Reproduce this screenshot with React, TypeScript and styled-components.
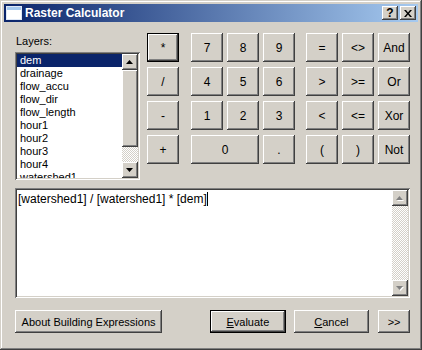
import React from 'react';
import styled, { createGlobalStyle, css } from 'styled-components';

const face = '#d4d0c8';

const GlobalStyle = createGlobalStyle`
  html, body { margin: 0; padding: 0; background: ${face}; }
  #root { width: 422px; height: 350px; overflow: hidden; }
`;

const raised = css`
  background: ${face};
  box-shadow: inset -1px -1px #404040, inset 1px 1px #fff,
    inset -2px -2px #808080, inset 2px 2px ${face};
`;

const sunken = css`
  box-shadow: inset 1px 1px #808080, inset -1px -1px #fff,
    inset 2px 2px #404040, inset -2px -2px ${face};
`;

const checker = css`
  background: repeating-conic-gradient(${face} 0 25%, #fff 0 50%) 0 0 / 2px 2px;
`;

const Window = styled.div`
  width: 422px;
  height: 350px;
  box-sizing: border-box;
  padding: 4px;
  background: ${face};
  box-shadow: inset -1px -1px #404040, inset 1px 1px ${face},
    inset -2px -2px #808080, inset 2px 2px #fff;
  display: flex;
  flex-direction: column;
  font-family: "Liberation Sans", Arial, sans-serif;
  font-size: 11px;
  color: #000;
`;

const TitleBar = styled.div`
  height: 18px;
  display: flex;
  align-items: center;
  padding: 0 2px 0 2px;
  background: linear-gradient(to right, #0a246a, #a6caf0);
`;

const TitleText = styled.span`
  color: #fff;
  font-weight: bold;
  font-size: 12px;
  margin-left: 3px;
`;

const CaptionButtons = styled.div`
  margin-left: auto;
  display: flex;
  gap: 2px;
`;

const CaptionButton = styled.div`
  ${raised};
  width: 16px;
  height: 14px;
  display: flex;
  align-items: center;
  justify-content: center;
  font-weight: bold;
  font-size: 12px;
  line-height: 14px;
`;

const Body = styled.div`
  flex: 1;
  display: flex;
  flex-direction: column;
  padding: 12px 8px 0 11px;
`;

const TopRow = styled.div`
  display: flex;
  align-items: flex-start;
`;

const LayersCol = styled.div`
  width: 126px;
  display: flex;
  flex-direction: column;
`;

const Label = styled.div`
  height: 14px;
  line-height: 14px;
  margin-bottom: 4px;
  padding-left: 1px;
`;

const ListBox = styled.div`
  ${sunken};
  background: #fff;
  height: 128px;
  box-sizing: border-box;
  padding: 2px;
  display: flex;
`;

const Items = styled.div`
  flex: 1;
  overflow: hidden;
`;

const Item = styled.div<{ $selected?: boolean }>`
  height: 13px;
  line-height: 13px;
  padding-left: 3px;
  white-space: nowrap;
  background: ${(p) => (p.$selected ? '#0a246a' : 'transparent')};
  color: ${(p) => (p.$selected ? '#fff' : '#000')};
`;

const ScrollBar = styled.div`
  width: 16px;
  display: flex;
  flex-direction: column;
`;

const ScrollButton = styled.div`
  ${raised};
  height: 16px;
  flex: none;
  display: flex;
  align-items: center;
  justify-content: center;
`;

const Thumb = styled.div<{ $h: number }>`
  ${raised};
  height: ${(p) => p.$h}px;
  flex: none;
`;

const Track = styled.div`
  ${checker};
  flex: 1;
`;

const Pad = styled.div`
  display: flex;
  margin-left: 7px;
  margin-top: -1px;
`;

const KeyGroup = styled.div<{ $cols: number; $ml?: number }>`
  display: grid;
  grid-template-columns: repeat(${(p) => p.$cols}, 32px);
  grid-auto-rows: 29px;
  column-gap: 4px;
  row-gap: 5px;
  margin-left: ${(p) => p.$ml ?? 0}px;
`;

const Key = styled.div<{ $span?: number; $default?: boolean }>`
  ${raised};
  ${(p) => p.$default && css`border: 1px solid #000;`}
  box-sizing: border-box;
  grid-column: span ${(p) => p.$span ?? 1};
  display: flex;
  align-items: center;
  justify-content: center;
  font-size: 12px;
`;

const Expression = styled.div`
  ${sunken};
  background: #fff;
  margin-top: 8px;
  height: 110px;
  box-sizing: border-box;
  padding: 2px;
  display: flex;
`;

const ExprText = styled.div`
  flex: 1;
  padding: 2px 1px;
  font-size: 12px;
  line-height: 15px;
  white-space: nowrap;
`;

const Caret = styled.span`
  display: inline-block;
  width: 0;
  height: 14px;
  border-left: 1px solid #000;
  vertical-align: -3px;
`;

const BottomRow = styled.div`
  display: flex;
  margin-top: 12px;
  height: 23px;
`;

const Button = styled.div<{ $w: number; $ml?: number; $default?: boolean }>`
  ${raised};
  ${(p) => p.$default && css`border: 1px solid #000;`}
  box-sizing: border-box;
  width: ${(p) => p.$w}px;
  margin-left: ${(p) => p.$ml ?? 0}px;
  display: flex;
  align-items: center;
  justify-content: center;
  font-size: 11px;
`;

const Arrow = ({ down, disabled }: { down?: boolean; disabled?: boolean }) => {
  const pts = down ? '0,0 7,0 3.5,4' : '3.5,0 7,4 0,4';
  return (
    <svg width="8" height="5" viewBox="0 0 8 5">
      {disabled && <polygon points={pts} fill="#fff" transform="translate(1,1)" />}
      <polygon points={pts} fill={disabled ? '#808080' : '#000'} />
    </svg>
  );
};

const layers = ['dem', 'drainage', 'flow_accu', 'flow_dir', 'flow_length', 'hour1', 'hour2', 'hour3', 'hour4', 'watershed1'];

export default function App() {
  return (
    <>
      <GlobalStyle />
      <Window>
        <TitleBar>
          <svg width="16" height="14" viewBox="0 0 16 14">
            <rect x="0.5" y="0.5" width="15" height="13" fill="#fff" stroke="#dfe8f6" />
            <rect x="1" y="1" width="14" height="3" fill="#a6caf0" />
          </svg>
          <TitleText>Raster Calculator</TitleText>
          <CaptionButtons>
            <CaptionButton>?</CaptionButton>
            <CaptionButton>
              <svg width="8" height="7" viewBox="0 0 8 7">
                <path d="M0 0h2l2 2.5L6 0h2L5 3.5 8 7H6L4 4.5 2 7H0l3-3.5z" fill="#000" />
              </svg>
            </CaptionButton>
          </CaptionButtons>
        </TitleBar>
        <Body>
          <TopRow>
            <LayersCol>
              <Label>Layers:</Label>
              <ListBox>
                <Items>
                  {layers.map((l, i) => (
                    <Item key={l} $selected={i === 0}>{l}</Item>
                  ))}
                </Items>
                <ScrollBar>
                  <ScrollButton><Arrow /></ScrollButton>
                  <Thumb $h={77} />
                  <Track />
                  <ScrollButton><Arrow down /></ScrollButton>
                </ScrollBar>
              </ListBox>
            </LayersCol>
            <Pad>
              <KeyGroup $cols={1}>
                <Key $default>*</Key>
                <Key>/</Key>
                <Key>-</Key>
                <Key>+</Key>
              </KeyGroup>
              <KeyGroup $cols={3} $ml={12}>
                <Key>7</Key><Key>8</Key><Key>9</Key>
                <Key>4</Key><Key>5</Key><Key>6</Key>
                <Key>1</Key><Key>2</Key><Key>3</Key>
                <Key $span={2}>0</Key><Key>.</Key>
              </KeyGroup>
              <KeyGroup $cols={3} $ml={11}>
                <Key>=</Key><Key>&lt;&gt;</Key><Key>And</Key>
                <Key>&gt;</Key><Key>&gt;=</Key><Key>Or</Key>
                <Key>&lt;</Key><Key>&lt;=</Key><Key>Xor</Key>
                <Key>(</Key><Key>)</Key><Key>Not</Key>
              </KeyGroup>
            </Pad>
          </TopRow>
          <Expression>
            <ExprText>
              [watershed1] / [watershed1] * [dem]<Caret />
            </ExprText>
            <ScrollBar>
              <ScrollButton><Arrow disabled /></ScrollButton>
              <Track />
              <ScrollButton><Arrow down disabled /></ScrollButton>
            </ScrollBar>
          </Expression>
          <BottomRow>
            <Button $w={148}>About Building Expressions</Button>
            <Button $w={76} $ml={48} $default><span><u>E</u>valuate</span></Button>
            <Button $w={76} $ml={8}><span><u>C</u>ancel</span></Button>
            <Button $w={32} $ml={9}>&gt;&gt;</Button>
          </BottomRow>
        </Body>
      </Window>
    </>
  );
}
